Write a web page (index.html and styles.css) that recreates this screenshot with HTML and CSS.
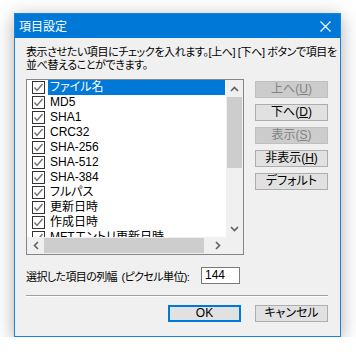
FILE: index.html
```html
<!DOCTYPE html>
<html lang="ja">
<head>
    <meta charset="UTF-8">
    <title>項目設定</title>
    <link rel="stylesheet" href="styles.css">
</head>
<body>
    <div class="window">
        <div class="titlebar">
            <span class="title">項目設定</span>
            <svg class="close" width="11" height="11" viewBox="0 0 11 11">
                <path d="M0.5 0.5 L10.5 10.5 M10.5 0.5 L0.5 10.5" stroke="#fff" stroke-width="1.2" fill="none"/>
            </svg>
        </div>

        <div class="content">
            <p class="desc">表示させたい項目にチェックを入れます。[上へ] [下へ] ボタンで項目を<br>並べ替えることができます。</p>

            <div class="main">
                <div class="listbox">
                    <div class="rows">
                        <div class="row selected"><span class="check"></span><span class="label">ファイル名</span></div>
                        <div class="row"><span class="check"></span><span class="label">MD5</span></div>
                        <div class="row"><span class="check"></span><span class="label">SHA1</span></div>
                        <div class="row"><span class="check"></span><span class="label">CRC32</span></div>
                        <div class="row"><span class="check"></span><span class="label">SHA-256</span></div>
                        <div class="row"><span class="check"></span><span class="label">SHA-512</span></div>
                        <div class="row"><span class="check"></span><span class="label">SHA-384</span></div>
                        <div class="row"><span class="check"></span><span class="label">フルパス</span></div>
                        <div class="row"><span class="check"></span><span class="label">更新日時</span></div>
                        <div class="row"><span class="check"></span><span class="label">作成日時</span></div>
                        <div class="row"><span class="check"></span><span class="label">MFTエントリ更新日時</span></div>
                    </div>
                    <div class="vscroll">
                        <div class="arrow">
                            <svg width="9" height="6" viewBox="0 0 9 6"><polyline points="1,5 4.5,1.5 8,5" stroke="#606060" stroke-width="1.6" fill="none"/></svg>
                        </div>
                        <div class="track"><div class="vthumb"></div></div>
                        <div class="arrow">
                            <svg width="9" height="6" viewBox="0 0 9 6"><polyline points="1,1 4.5,4.5 8,1" stroke="#606060" stroke-width="1.6" fill="none"/></svg>
                        </div>
                    </div>
                    <div class="hscroll">
                        <div class="arrow">
                            <svg width="6" height="9" viewBox="0 0 6 9"><polyline points="5,1 1.5,4.5 5,8" stroke="#606060" stroke-width="1.6" fill="none"/></svg>
                        </div>
                        <div class="htrack"><div class="hthumb"></div></div>
                        <div class="arrow">
                            <svg width="6" height="9" viewBox="0 0 6 9"><polyline points="1,1 4.5,4.5 1,8" stroke="#606060" stroke-width="1.6" fill="none"/></svg>
                        </div>
                    </div>
                    <div class="corner"></div>
                </div>

                <div class="side-buttons">
                    <button class="btn" disabled>上へ(<u>U</u>)</button>
                    <button class="btn">下へ(<u>D</u>)</button>
                    <button class="btn" disabled>表示(<u>S</u>)</button>
                    <button class="btn">非表示(<u>H</u>)</button>
                    <button class="btn">デフォルト</button>
                </div>
            </div>

            <div class="width-row">
                <span class="width-label">選択した項目の列幅 (ピクセル単位):</span>
                <span class="input">144</span>
            </div>

            <div class="separator"></div>

            <div class="footer">
                <button class="btn default">OK</button>
                <button class="btn">キャンセル</button>
            </div>
        </div>
    </div>
</body>
</html>
```

FILE: styles.css
```css
body {
    margin: 0;
    background: #fff;
    font-family: "Liberation Sans", "Noto Sans CJK JP", sans-serif;
    font-size: 12px;
    font-feature-settings: "palt";
    color: #000;
}
.window {
    box-sizing: border-box;
    width: 327px;
    height: 324px;
    margin: 13px 0 0 14px;
    border: 1px solid #1883d7;
    background: #f0f0f0;
    box-shadow: 0 4px 18px rgba(0, 0, 0, 0.32);
}
.titlebar {
    height: 24px;
    background: #0078d7;
    display: flex;
    align-items: center;
    justify-content: space-between;
    padding: 0 9px 0 4px;
    color: #fff;
}
.title {
    font-family: "Noto Sans CJK JP", sans-serif;
    font-size: 12px;
    line-height: 24px;
}
.close {
    display: block;
    margin-top: 1px;
}
.content {
    padding: 8px 12px 0 11px;
}
.desc {
    margin: 0;
    font-size: 11px;
    line-height: 13px;
    white-space: nowrap;
    letter-spacing: -0.4px;
}
.main {
    display: flex;
    margin-top: 7px;
}
.listbox {
    box-sizing: border-box;
    width: 218px;
    height: 176px;
    border: 1px solid #828790;
    background: #fff;
    display: grid;
    grid-template-columns: 199px 17px;
    grid-template-rows: 157px 17px;
}
.rows {
    overflow: hidden;
}
.row {
    height: 15px;
    display: flex;
    align-items: center;
    padding-left: 5px;
}
.check {
    box-sizing: border-box;
    width: 13px;
    height: 13px;
    border: 1px solid #333;
    background: #fff url("data:image/svg+xml,%3Csvg xmlns='http://www.w3.org/2000/svg' width='11' height='11'%3E%3Cpolyline points='1.5,5.5 4,8.5 9.5,2' stroke='%23707070' stroke-width='1.4' fill='none'/%3E%3C/svg%3E") no-repeat center;
    flex-shrink: 0;
}
.label {
    flex: 1;
    height: 15px;
    line-height: 15px;
    margin: 0 1px 0 3px;
    padding-left: 2px;
    white-space: nowrap;
}
.selected .label {
    background: #0078d7;
    color: #fff;
}
.vscroll {
    background: #f0f0f0;
    display: flex;
    flex-direction: column;
}
.arrow {
    width: 17px;
    height: 17px;
    display: flex;
    align-items: center;
    justify-content: center;
    flex-shrink: 0;
}
.track {
    flex: 1;
    padding: 0 1px;
}
.vthumb {
    height: 71px;
    background: #cdcdcd;
}
.hscroll {
    background: #f0f0f0;
    display: flex;
}
.htrack {
    flex: 1;
    padding: 1px 0;
}
.hthumb {
    width: 160px;
    height: 15px;
    background: #cdcdcd;
}
.corner {
    background: #f0f0f0;
}
.side-buttons {
    display: flex;
    flex-direction: column;
    gap: 6px;
    margin: 2px 0 0 11px;
}
.btn {
    box-sizing: border-box;
    width: 73px;
    height: 17px;
    padding: 0;
    border: 1px solid #adadad;
    background: #e1e1e1;
    font-family: inherit;
    font-size: 12px;
    font-feature-settings: "palt";
    line-height: 15px;
    color: #000;
}
.btn:disabled {
    background: #cccccc;
    border-color: #bfbfbf;
    color: #838383;
}
.btn.default {
    border: 2px solid #0078d7;
    line-height: 13px;
}
.width-row {
    display: flex;
    align-items: center;
    margin-top: 12px;
}
.width-label {
    width: 175px;
    white-space: nowrap;
    font-size: 11px;
    letter-spacing: -0.6px;
    word-spacing: 2px;
}
.input {
    box-sizing: border-box;
    width: 39px;
    height: 17px;
    border: 1px solid #7a7a7a;
    background: #fff;
    padding-left: 3px;
    line-height: 15px;
}
.separator {
    margin-top: 11px;
    border-top: 1px solid #a0a0a0;
    border-bottom: 1px solid #fff;
    height: 0;
}
.footer {
    display: flex;
    justify-content: flex-end;
    gap: 14px;
    margin-top: 8px;
}
```
